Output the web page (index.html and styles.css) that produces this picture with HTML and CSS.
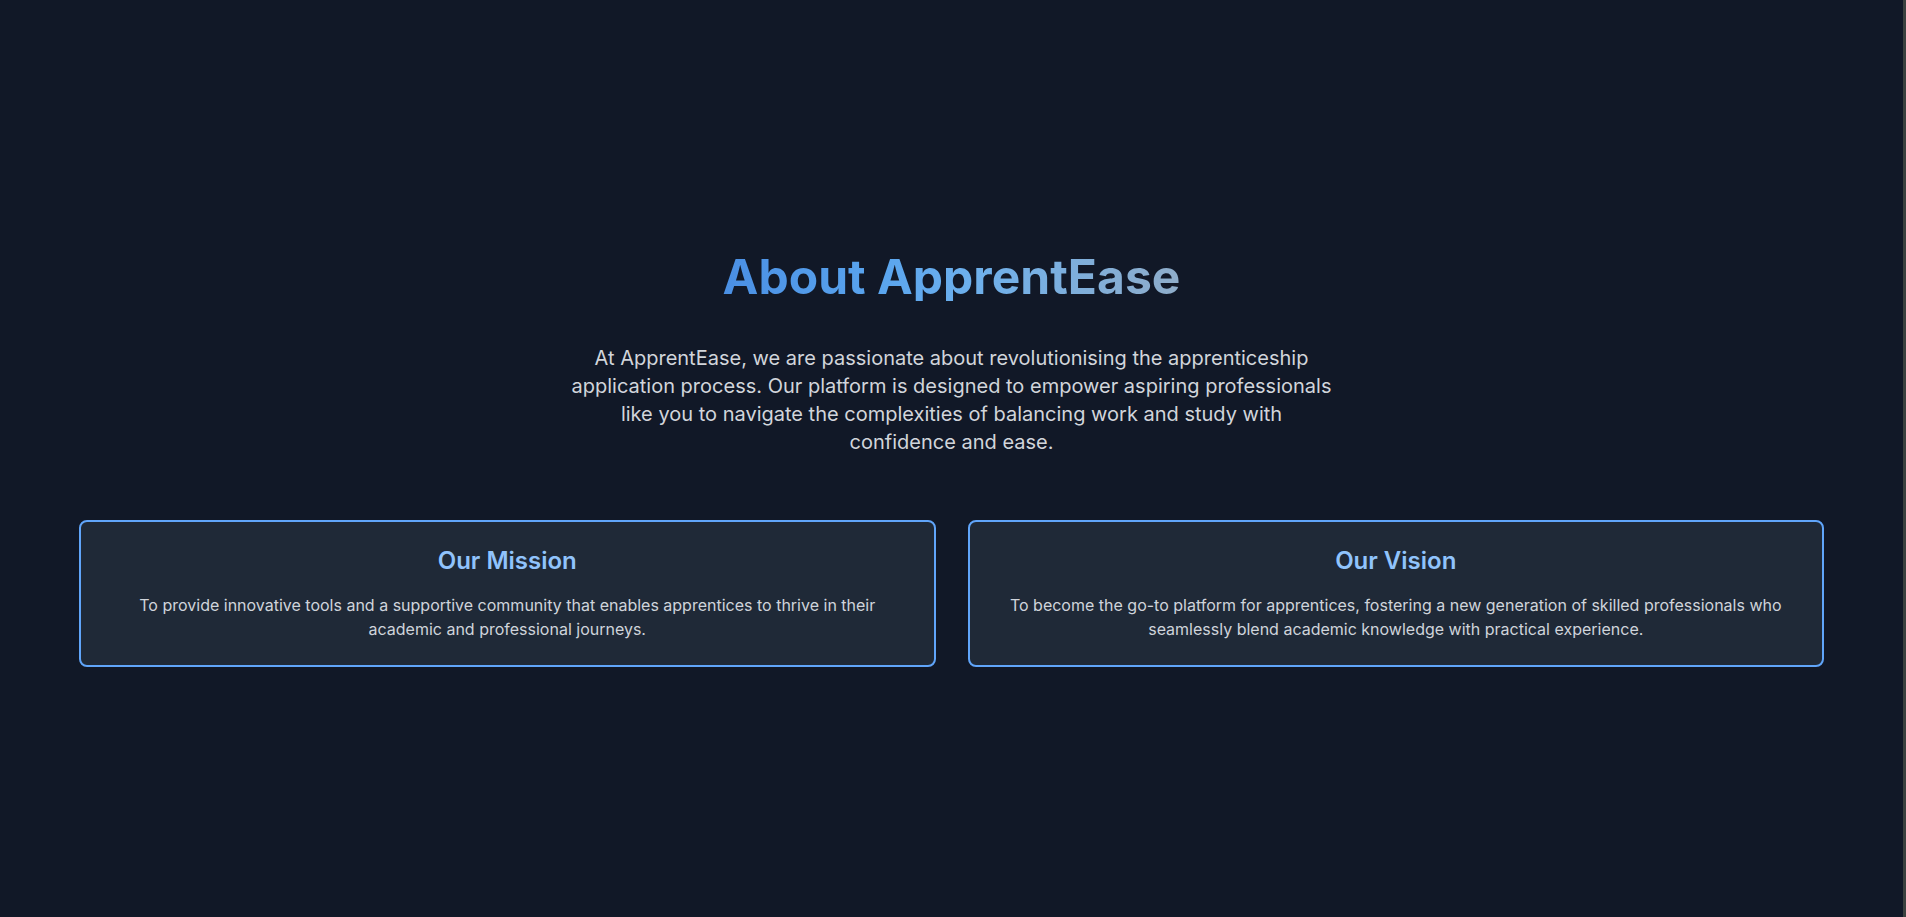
FILE: index.html
```html
<!DOCTYPE html>
<html lang="en">
<head>
<meta charset="utf-8">
<title>About ApprentEase</title>
<link rel="stylesheet" href="styles.css">
</head>
<body>
<section class="about">
  <h1 class="title">About ApprentEase</h1>
  <p class="intro">At ApprentEase, we are passionate about revolutionising the apprenticeship application process. Our platform is designed to empower aspiring professionals like you to navigate the complexities of balancing work and study with confidence and ease.</p>
  <div class="cards">
    <div class="card">
      <h2 class="card-title">Our Mission</h2>
      <p class="card-text">To provide innovative tools and a supportive community that enables apprentices to thrive in their academic and professional journeys.</p>
    </div>
    <div class="card">
      <h2 class="card-title">Our Vision</h2>
      <p class="card-text">To become the go-to platform for apprentices, fostering a new generation of skilled professionals who seamlessly blend academic knowledge with practical experience.</p>
    </div>
  </div>
</section>
</body>
</html>
```
FILE: styles.css
```css
html {
  background: #111827;
  border-right: 3px solid #3b413f;
  height: 100%;
}
body {
  margin: 0;
  min-height: 100vh;
  background: #111827;
  font-family: Inter, "Noto Sans", "Liberation Sans", sans-serif;
  color: #d1d5db;
  display: flex;
  align-items: center;
  justify-content: center;
}
.about {
  width: 100%;
  box-sizing: border-box;
  padding: 3px 79px 0;
  display: flex;
  flex-direction: column;
  align-items: center;
}
.title {
  margin: 0 0 43px;
  font-size: 48px;
  line-height: 48px;
  font-weight: 700;
  width: fit-content;
  background: linear-gradient(90deg, #4a8fe4 0%, #5aa5ee 35%, #6eb0ec 55%, #8fadca 100%);
  -webkit-background-clip: text;
  background-clip: text;
  color: transparent;
}
.intro {
  margin: 0 0 64px;
  max-width: 768px;
  font-size: 20px;
  line-height: 28px;
  text-align: center;
  color: #d1d5db;
}
.cards {
  width: 100%;
  display: grid;
  grid-template-columns: 1fr 1fr;
  gap: 32px;
}
.card {
  background: #1f2937;
  border: 2px solid #60a5fa;
  border-radius: 8px;
  padding: 23px 24px 24px;
  text-align: center;
}
.card-title {
  margin: 0 0 16px;
  font-size: 24px;
  line-height: 32px;
  font-weight: 600;
  color: #90c3fc;
}
.card-text {
  margin: 0;
  font-size: 16px;
  line-height: 24px;
  color: #cfd4db;
}
```
